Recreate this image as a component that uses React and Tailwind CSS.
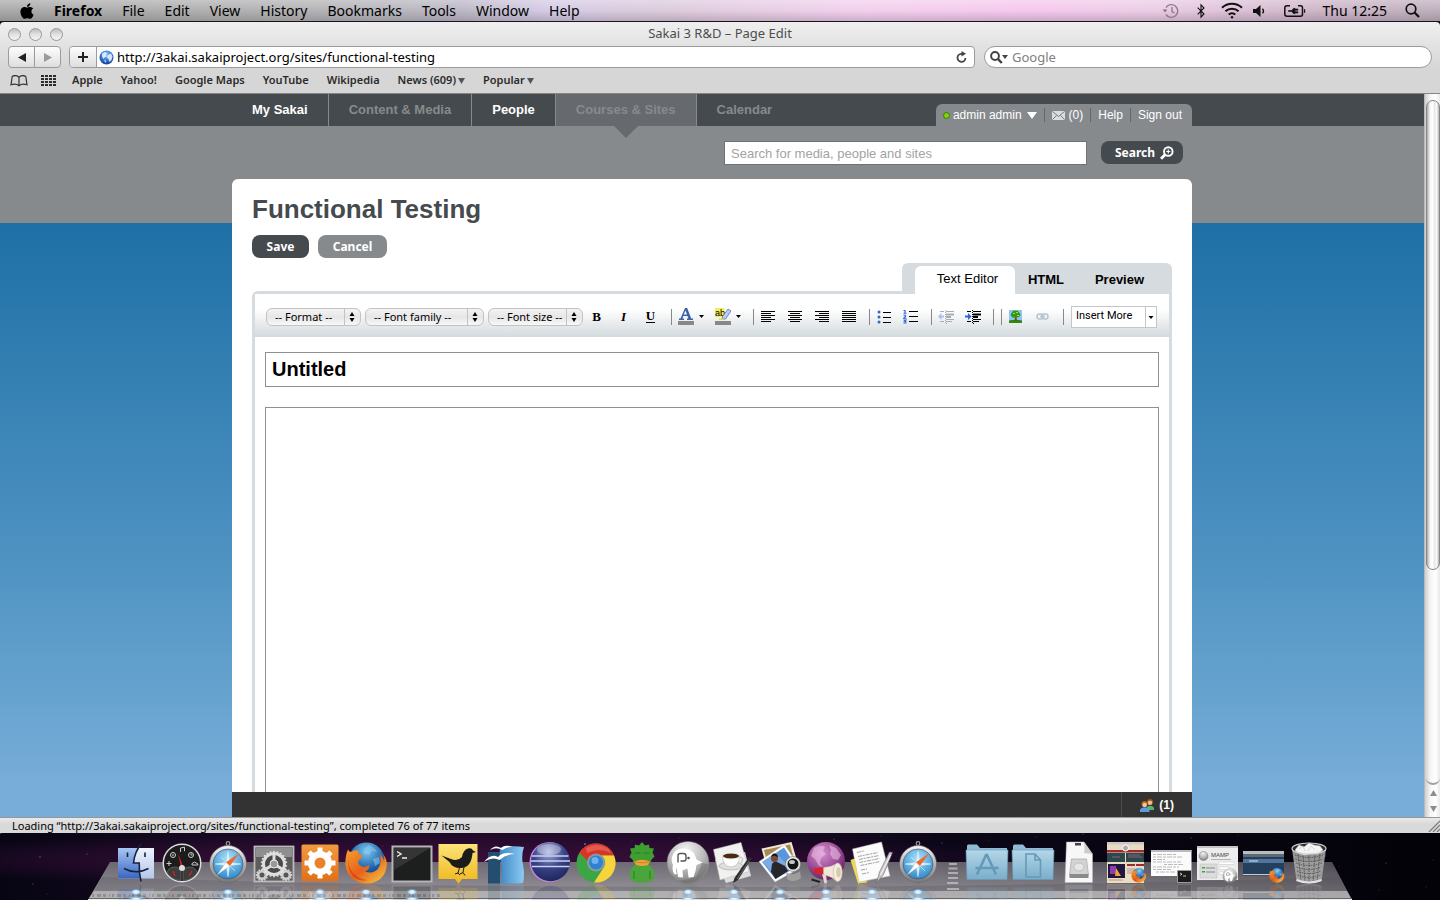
import React from "react";
import { FaApple } from "react-icons/fa";

const UI = "font-['Noto_Sans','Open_Sans',sans-serif]";

const MENUS = ["File", "Edit", "View", "History", "Bookmarks", "Tools", "Window", "Help"];
const BOOKMARKS = ["Apple", "Yahoo!", "Google Maps", "YouTube", "Wikipedia"];

/* ---------- System menu bar ---------- */

function MenuBar() {
  return (
    <header
      className={`${UI} flex h-[22px] shrink-0 items-center justify-between border-b border-[#1d1020] bg-[linear-gradient(to_bottom,rgba(255,255,255,0.28),rgba(255,255,255,0)_50%,rgba(60,60,60,0.22)),linear-gradient(to_right,#aaaaaa,#b4b4b6_22%,#bcb8c6_32%,#d5cbe6_38%,#dccbdc_46%,#f3d0ee_60%,#f5c8ee_72%,#eccde6_80%,#cdb5c8_92%,#bfb0bd)] text-sm text-black`}
    >
      <nav className="flex items-center gap-5 pl-5">
        <button aria-label="Apple menu" className="flex w-[14px] justify-center">
          <FaApple className="h-[18px] w-[18px] shrink-0" />
        </button>
        <button className="font-bold">Firefox</button>
        {MENUS.map((m) => (
          <button key={m}>{m}</button>
        ))}
      </nav>
      <div className="flex items-center pr-5">
        <svg className="mr-[17px] h-4 w-[18px]" viewBox="0 0 18 16" fill="none" stroke="#8d7d8b" strokeWidth="1.4">
          <path d="M4 4.5A6.4 6.4 0 1 1 4 11.5M3 8.5V6.5M10 4v4.5l2.5 1.5" />
          <path d="M.5 6.5h5L3 9.6z" fill="#8d7d8b" stroke="none" />
        </svg>
        <svg className="mr-4 h-4 w-2" viewBox="0 0 8 16" fill="none" stroke="#111" strokeWidth="1.1">
          <path d="M.7 4.7 7 11l-3 3.2V1.8L7 5 .7 11.3" />
        </svg>
        <svg className="mr-2.5 h-[17px] w-[22px]" viewBox="0 0 22 17" fill="none" stroke="#111" strokeWidth="2">
          <path d="M1 5.8a14.5 14.5 0 0 1 20 0M4.400 9.300a9.600 9.600 0 0 1 13.200 0M7.700 12.600a4.900 4.900 0 0 1 6.600 0" />
          <circle cx="11" cy="15.200" r="1.200" fill="#111" stroke="none" />
        </svg>
        <svg className="mr-[17px] h-3 w-[14px]" viewBox="0 0 14 12">
          <path d="M0 4h3l4.500-4v12L3 8H0z" fill="#111" />
          <path d="M9.500 3.600c1.300 1.500 1.300 3.300 0 4.800" fill="none" stroke="#111" strokeWidth="1.300" />
        </svg>
        <svg className="mr-4 h-3 w-[22px]" viewBox="0 0 22 12">
          <path d="M6 .8H3Q.8.8.8 3v6q0 2.200 2.200 2.200H16.500q2 0 2-2V3q0-2.200-2-2.200H14" fill="none" stroke="#111" strokeWidth="1.500" />
          <path d="M20 4.200h1.200v3.600H20z" fill="#111" />
          <path d="M4.500 5.500H8Q8.500 3.200 11 3.200V4h3v1.200h-3v1.600h3V8h-3v.8Q8.500 8.800 8 6.500H4.500z" fill="#111" stroke="#111" strokeWidth=".6" />
        </svg>
        <time className="mr-[18px]">Thu 12:25</time>
        <svg className="h-[15px] w-[15px]" viewBox="0 0 15 15" fill="none" stroke="#111">
          <circle cx="6" cy="6" r="4.800" strokeWidth="1.700" />
          <path d="M9.500 9.500 14 14" strokeWidth="2.300" />
        </svg>
      </div>
    </header>
  );
}

/* ---------- Browser chrome ---------- */

function WindowDot({ label }) {
  return (
    <button
      aria-label={label}
      className="h-[13px] w-[13px] rounded-full border border-[#989898] bg-[linear-gradient(to_bottom,#bdbdbd,#e2e2e2_50%,#f4f4f4)]"
    />
  );
}

function GlobeIcon() {
  return (
    <svg className="h-[15px] w-[15px] shrink-0" viewBox="0 0 15 15">
      <defs>
        <radialGradient id="fav" cx=".5" cy=".3" r=".7">
          <stop offset="0" stopColor="#8fc4f5" />
          <stop offset=".6" stopColor="#2f73cf" />
          <stop offset="1" stopColor="#17408f" />
        </radialGradient>
      </defs>
      <circle cx="7.500" cy="7.500" r="7" fill="url(#fav)" />
      <path d="M3 3.500 6 2l2 1-1 2 1 1.500-2 .5L4.500 9 3 6.500zM9 5l3-1.500 1.500 3-1 3.500-2 2-1-3L8 7.500zM5 10l2 .5L6.500 13z" fill="#eef6ff" opacity=".85" />
    </svg>
  );
}

function BrowserChrome() {
  return (
    <div className={`${UI} shrink-0 rounded-t-[4px] border-b border-[#868686] bg-[linear-gradient(to_bottom,#efefef,#d6d6d6_65%)]`}>
      <div className="grid h-6 grid-cols-[1fr_auto_1fr] items-center px-2">
        <div className="flex gap-2">
          <WindowDot label="Close" />
          <WindowDot label="Minimize" />
          <WindowDot label="Zoom" />
        </div>
        <h1 className="text-[13px] text-[#4d4d4d]">Sakai 3 R&amp;D – Page Edit</h1>
      </div>
      <div className="flex h-[22px] px-2">
        <div className="flex w-[53px] shrink-0 rounded border border-[#9b9b9b] bg-[linear-gradient(to_bottom,#fdfdfd,#dedede)]">
          <button aria-label="Back" className="flex flex-1 items-center justify-center border-r border-[#9b9b9b]">
            <svg className="h-[9px] w-2" viewBox="0 0 8 9"><path d="M8 0v9L0 4.500z" fill="#222" /></svg>
          </button>
          <button aria-label="Forward" className="flex flex-1 items-center justify-center">
            <svg className="h-[9px] w-2" viewBox="0 0 8 9"><path d="M0 0v9l8-4.500z" fill="#9a9a9a" /></svg>
          </button>
        </div>
        <div className="ml-2 flex min-w-0 flex-1 items-center rounded border border-[#9b9b9b] bg-white">
          <button aria-label="Add bookmark" className="flex h-full w-[27px] shrink-0 items-center justify-center rounded-l border-r border-[#9b9b9b] bg-[linear-gradient(to_bottom,#fdfdfd,#dedede)]">
            <svg className="h-[10px] w-[10px]" viewBox="0 0 10 10"><path d="M4 0h2v4h4v2H6v4H4V6H0V4h4z" fill="#222" /></svg>
          </button>
          <span className="ml-0.5 flex"><GlobeIcon /></span>
          <input
            aria-label="Address"
            defaultValue="http://3akai.sakaiproject.org/sites/functional-testing"
            className="ml-[3px] min-w-0 flex-1 bg-transparent text-[13px] leading-5 text-black outline-none"
          />
          <button aria-label="Reload" className="mr-[7px]">
            <svg className="h-3 w-[11px]" viewBox="0 0 11 12">
              <path d="M6.500 2.800H5.300a4 4 0 1 0 4.200 4.200" fill="none" stroke="#444" strokeWidth="1.800" />
              <path d="M5.500 0v5.600L10 2.800z" fill="#444" />
            </svg>
          </button>
        </div>
        <div className="ml-[9px] flex w-[448px] min-w-0 items-center rounded-full border border-[#9b9b9b] bg-white pl-[5px]">
          <svg className="h-[13px] w-[18px] shrink-0" viewBox="0 0 18 13">
            <circle cx="5" cy="5" r="3.900" fill="none" stroke="#444" strokeWidth="2" />
            <path d="m7.800 7.800 4 4.200" stroke="#444" strokeWidth="2.400" />
            <path d="M12 4h6l-3 4z" fill="#444" />
          </svg>
          <input aria-label="Google search" placeholder="Google" className="ml-1 min-w-0 flex-1 bg-transparent text-[13px] leading-5 outline-none placeholder:text-[#808080]" />
        </div>
      </div>
      <nav className="flex h-[25px] items-center pl-[10px] text-[11px] font-semibold text-[#2b2b2b]">
        <button aria-label="Bookmarks" className="mr-[13px]">
          <svg className="h-3 w-[18px]" viewBox="0 0 18 12" fill="none" stroke="#333" strokeWidth="1.200">
            <path d="M9 2.200C7 .4 4 .4 2.200 1.500L1 9.800C3.500 9 7 9 9 10.800 11 9 14.500 9 17 9.800L15.800 1.500C14 .4 11 .4 9 2.200zM9 2.200v8.500" />
          </svg>
        </button>
        <button aria-label="Top sites" className="mr-4">
          <svg className="h-[11px] w-[15px]" viewBox="0 0 15 11">
            <path d="M0 1h15M0 4h15M0 7h15M0 10h15" stroke="#2b2b2b" strokeWidth="2" strokeDasharray="3 1" />
          </svg>
        </button>
        <div className="flex items-center gap-[18px]">
          {BOOKMARKS.map((b) => (
            <a key={b} href="#">{b}</a>
          ))}
          {["News (609)", "Popular"].map((b) => (
            <button key={b} className="flex items-center gap-0.5">
              {b}
              <svg className="h-[6px] w-[7px]" viewBox="0 0 7 6"><path d="M0 0h7L3.500 6z" fill="#555" /></svg>
            </button>
          ))}
        </div>
      </nav>
    </div>
  );
}

/* ---------- Site header ---------- */

function SiteNav() {
  const item = "flex items-center border-r border-[#868a8d] px-5";
  const divider = "mx-[7px] h-[14px] w-px bg-[#63676a]";
  return (
    <div className="bg-[#454a4e]">
      <div className="mx-auto flex h-8 w-full max-w-[960px] justify-between">
        <nav className="flex text-[13px] font-bold text-white">
          <a href="#" className={item}>My Sakai</a>
          <a href="#" className={`${item} text-[#868a8d]`}>Content &amp; Media</a>
          <a href="#" className={item}>People</a>
          <a href="#" className={`${item} relative bg-[#666a6f] text-[#868a8d]`}>
            Courses &amp; Sites
            <svg className="absolute top-full left-1/2 -ml-3 h-3 w-6" viewBox="0 0 24 12"><path d="M0 0h24L12 12z" fill="#666a6f" /></svg>
          </a>
          <a href="#" className="flex items-center px-5 text-[#868a8d]">Calendar</a>
        </nav>
        <div className="flex h-[22px] items-center self-end rounded-t-[6px] bg-[#868a8d] px-[7px] text-xs text-white">
          <span className="mr-[3px] h-[7px] w-[7px] rounded-full border border-[#3c7a00] bg-[#7fd010]" />
          <button className="flex items-center gap-[5px]">
            admin admin
            <svg className="h-[7px] w-[10px]" viewBox="0 0 10 7"><path d="M0 0h10L5 7z" fill="#fff" /></svg>
          </button>
          <span className={divider} />
          <a href="#" className="flex items-center gap-1">
            <svg className="h-[9px] w-[13px]" viewBox="0 0 13 9">
              <rect width="13" height="9" rx="1" fill="#dcdcdc" />
              <path d="m.5.5 6 5 6-5M.5 8.500l4-4M12.500 8.500l-4-4" fill="none" stroke="#777b7e" />
            </svg>
            (0)
          </a>
          <span className={divider} />
          <a href="#">Help</a>
          <span className={divider} />
          <a href="#" className="pr-[3px]">Sign out</a>
        </div>
      </div>
    </div>
  );
}

function SearchRow() {
  return (
    <form className="mt-[15px] mb-[14px] flex justify-end pr-[9px]" onSubmit={(e) => e.preventDefault()}>
      <input
        aria-label="Search"
        placeholder="Search for media, people and sites"
        className="h-6 w-[363px] border border-[#6e7275] bg-white px-1.5 text-[13px] outline-none placeholder:text-[#a3a3a3]"
      />
      <button className={`${UI} ml-[14px] flex h-[23px] w-[82px] items-center gap-[5px] rounded-[8px] bg-[#454a4e] pl-[14px] text-xs font-bold text-white`}>
        Search
        <svg className="h-[14px] w-[14px]" viewBox="0 0 14 14" fill="none" stroke="#fff">
          <circle cx="8.300" cy="5.500" r="4.300" strokeWidth="1.900" />
          <path d="m5 8.800-4 4" strokeWidth="2.800" />
          <path d="M6.300 5.500h4M8.300 3.500v4" strokeWidth="1.200" />
        </svg>
      </button>
    </form>
  );
}

/* ---------- Editor ---------- */

function PillSelect({ label, name, className }) {
  return (
    <span className={`relative flex h-[18px] ${className}`}>
      <select
        aria-label={name}
        className={`${UI} w-full appearance-none rounded-[6px] border border-[#c3c3c3] bg-[linear-gradient(to_bottom,#f4f4f4,#e6e6e6_50%,#f8f8f8)] pl-2 text-[11px] leading-4 text-black outline-none`}
      >
        <option>{label}</option>
      </select>
      <svg className="pointer-events-none absolute top-0 right-0 h-[18px] w-[17px]" viewBox="0 0 17 18">
        <path d="M.5 1v16" stroke="#c3c3c3" />
        <path d="M5.500 8 8 4l2.500 4zM5.500 10 8 14l2.500-4z" fill="#000" />
      </svg>
    </span>
  );
}

function Sep() {
  return <span className="ml-[7px] h-4 w-px shrink-0 bg-[#8d8688]" />;
}

function Tool({ label, children, className = "w-[27px]" }) {
  return (
    <button aria-label={label} className={`flex h-6 shrink-0 items-center justify-center ${className}`}>
      {children}
    </button>
  );
}

const ALIGN = {
  "Align left": "M0 1.500h14M0 3.500h10M0 5.500h14M0 7.500h10M0 9.500h14M0 11.500h10",
  "Align center": "M0 1.500h14M2 3.500h10M0 5.500h14M2 7.500h10M0 9.500h14M2 11.500h10",
  "Align right": "M0 1.500h14M4 3.500h10M0 5.500h14M4 7.500h10M0 9.500h14M4 11.500h10",
  Justify: "M0 1.500h14M0 3.500h14M0 5.500h14M0 7.500h14M0 9.500h14M0 11.500h14",
};

function IndentIcon({ out }) {
  const ink = out ? "#a9adb0" : "#000";
  const blue = out ? "#a9c0ee" : "#2f62d9";
  return (
    <svg className="h-[14px] w-4" viewBox="0 0 16 14" fill="none">
      <path d="M2 1.500h4M8 1.500h8M2 11.500h4M8 11.500h6M8 9.500h8M8 13.500h1" stroke={ink} />
      <path d="M8 4.500h8M8 7h5" stroke={ink} strokeWidth="2" />
      <path d="M7.500 0v14" stroke={ink} strokeDasharray="1 1" />
      {out ? <path d="M0 6.500 3.500 3v2.500H6v2H3.500V10z" fill={blue} /> : <path d="M6.500 6.500 3 3v2.500H0v2h3V10z" fill={blue} />}
    </svg>
  );
}

function Caret() {
  return <svg className="h-[3px] w-[5px]" viewBox="0 0 5 3"><path d="M0 0h5L2.500 3z" fill="#000" /></svg>;
}

function Toolbar() {
  return (
    <div className="flex h-[43px] items-center bg-[linear-gradient(to_bottom,#ffffff_35%,#d3dade)] pt-0.5 pr-3 pl-[11px]">
      <div className="flex gap-1">
        <PillSelect name="Format" label="-- Format --" className="w-[95px]" />
        <PillSelect name="Font family" label="-- Font family --" className="w-[119px]" />
        <PillSelect name="Font size" label="-- Font size --" className="w-[95px]" />
      </div>
      <div className="flex font-['Liberation_Serif',serif] text-[13px] font-bold">
        <Tool label="Bold"><span className="font-black">B</span></Tool>
        <Tool label="Italic"><span className="italic">I</span></Tool>
        <Tool label="Underline"><span className="border-b border-black leading-3">U</span></Tool>
      </div>
      <Sep />
      <Tool label="Text color" className="w-[37px] gap-[5px]">
        <svg className="h-[17px] w-4" viewBox="0 0 16 17">
          <path d="M7 0h2.200l4 10.500H15V12H9v-1.500h1.300L9.500 8H5.300l-.8 2.500H6V12H1v-1.500h1.500zm.4 2.500L5.800 6.600H9z" fill="#3d62a6" />
          <path d="M0 13h16v4H0z" fill="#888" />
        </svg>
        <Caret />
      </Tool>
      <Tool label="Highlight color" className="w-[37px] gap-[5px]">
        <svg className="h-[17px] w-4" viewBox="0 0 16 17">
          <path d="M0 0h9.500v9H0z" fill="#f4ee5a" />
          <text x="0" y="8" fontSize="9" fontFamily="Liberation Sans, sans-serif" fill="#000">ab</text>
          <path d="m13 1 3 2-5.500 8H7l.5-2.500z" fill="#b8cdf2" stroke="#5573a8" strokeWidth=".8" />
          <path d="M4 10.500h5l-1 1.500H4z" fill="#e5dd3c" />
          <path d="M0 13h16v4H0z" fill="#888" />
        </svg>
        <Caret />
      </Tool>
      <Sep />
      {Object.entries(ALIGN).map(([label, d]) => (
        <Tool key={label} label={label}>
          <svg className="h-[13px] w-[14px]" viewBox="0 0 14 13"><path d={d} stroke="#000" /></svg>
        </Tool>
      ))}
      <Sep />
      <Tool label="Bulleted list">
        <svg className="h-[14px] w-[14px]" viewBox="0 0 14 14">
          <path d="M6 2.500h8M6 7.500h8M6 12.500h8" stroke="#000" />
          <circle cx="2" cy="2" r="1.500" fill="#3d65b5" /><circle cx="2" cy="7" r="1.500" fill="#3d65b5" /><circle cx="2" cy="12" r="1.500" fill="#3d65b5" />
        </svg>
      </Tool>
      <Tool label="Numbered list">
        <svg className="h-[15px] w-[15px]" viewBox="0 0 15 15" fill="none">
          <path d="M6 2.500h9M6 7.500h9M6 12.500h9" stroke="#000" />
          <path d="M.5 1.500H2V4M.5 4.300h3M.5 6.200h2v1.300l-2 1.800h3M.5 11h2.300l-1.300 1.200h1.300v1.800H.5" stroke="#2f62d9" strokeWidth="1.100" />
        </svg>
      </Tool>
      <Sep />
      <Tool label="Outdent"><IndentIcon out /></Tool>
      <Tool label="Indent"><IndentIcon /></Tool>
      <Sep />
      <Sep />
      <Tool label="Insert image">
        <svg className="h-[13px] w-[13px]" viewBox="0 0 13 13">
          <path d="M0 0h13v13H0z" fill="#8fc3f5" />
          <path d="M0 10.500q6-1.500 13 0V13H0z" fill="#2d8a10" />
          <path d="M6 7h1.500l.5 4H5.500z" fill="#7a4a12" />
          <path d="M3 2.500Q4 0 6.500.8 9-.2 10 2.500 12 3.500 11 6 9.500 8 7 7.200 3.500 8.500 2.200 6 1 4 3 2.500z" fill="#2f9b12" />
          <path d="M4 3h2v1H4zM7 2h2v1H7zM8 5h2v1H8z" fill="#a6dc4a" />
        </svg>
      </Tool>
      <Tool label="Insert link">
        <svg className="h-[7px] w-[13px]" viewBox="0 0 13 7" fill="none" stroke="#b7c2cf" strokeWidth="1.500">
          <rect x="1" y="1" width="6" height="5" rx="2.400" /><rect x="6" y="1" width="6" height="5" rx="2.400" /><path d="M4 3.500h5" />
        </svg>
      </Tool>
      <Sep />
      <span className="relative ml-[7px] flex h-[22px] w-[86px] shrink-0">
        <select aria-label="Insert More" className="w-full appearance-none border border-[#c4c7c9] bg-white pl-1 font-['Roboto',sans-serif] text-[11px] text-black outline-none">
          <option>Insert More</option>
        </select>
        <svg className="pointer-events-none absolute top-0 right-0 h-[22px] w-3" viewBox="0 0 12 22">
          <path d="M.5 1v20" stroke="#c4c7c9" /><path d="M3.500 10h5L6 13z" fill="#000" />
        </svg>
      </span>
    </div>
  );
}

function Editor() {
  const pill = `${UI} h-[23px] rounded-[8px] text-xs font-bold text-white`;
  return (
    <main className="flex min-h-0 flex-1 flex-col rounded-t-[6px] bg-white px-5 pt-4">
      <h2 className="text-[26px] leading-7 font-bold text-[#454a4e]">Functional Testing</h2>
      <div className="mt-3 flex gap-[9px]">
        <button className={`${pill} w-[57px] bg-[#454a4e]`}>Save</button>
        <button className={`${pill} w-[69px] bg-[#868a8d]`}>Cancel</button>
      </div>
      <div role="tablist" className="mt-[5px] flex h-7 self-end rounded-t-[6px] bg-[#d5dbdf] pt-[3px] pl-[13px] text-[13px] text-black">
        <button role="tab" aria-selected="true" className="z-10 -mb-[3px] h-7 w-[100px] rounded-t-[6px] bg-white pb-0.5 pl-[5px]">Text Editor</button>
        <button role="tab" aria-selected="false" className="w-[62px] pt-0.5 font-bold">HTML</button>
        <button role="tab" aria-selected="false" className="mr-[10px] w-[85px] pt-0.5 font-bold">Preview</button>
      </div>
      <div className="flex min-h-0 flex-1 flex-col rounded-tl-[6px] border-x-[3px] border-t-[3px] border-[#d5dbdf]">
        <Toolbar />
        <div className="flex min-h-0 flex-1 flex-col px-2.5 pt-[15px]">
          <input aria-label="Page title" defaultValue="Untitled" className="h-[35px] w-full shrink-0 border border-[#8f8f8f] px-1.5 text-xl font-bold text-black outline-none" />
          <textarea aria-label="Page content" className="mt-5 min-h-0 w-full flex-1 resize-none border border-b-0 border-[#8f8f8f] outline-none" />
        </div>
      </div>
    </main>
  );
}

function ChatBar() {
  return (
    <div className="flex h-[25px] shrink-0 justify-end bg-[#333]">
      <button className="flex items-center gap-[5px] border-l border-[#4b4b4b] pr-[18px] pl-[18px] text-xs font-bold text-white">
        <svg className="h-[14px] w-[14px]" viewBox="0 0 14 14">
          <path d="M7 12V9q2-2 5-1l2 1.500V12z" fill="#58b368" />
          <circle cx="10" cy="4" r="3.300" fill="#8a4a1c" /><circle cx="10" cy="4.800" r="2.300" fill="#f0b98a" />
          <path d="M0 14v-2.500Q1.500 9.300 5 9.300t4.500 2V14z" fill="#5b9be0" />
          <circle cx="4.500" cy="6" r="3" fill="#b5651d" /><circle cx="4.700" cy="6.900" r="2.200" fill="#f6c79c" />
        </svg>
        (1)
      </button>
    </div>
  );
}

function Scrollbar() {
  return (
    <div aria-hidden="true" className="flex w-4 shrink-0 flex-col border-l border-[#b9b9b9] bg-[linear-gradient(to_right,#cfcfcf,#f5f5f5_35%,#ffffff_70%,#e9e9e9)] pl-px">
      <div className="mt-1.5 h-[470px] rounded-full border border-[#858585] bg-[linear-gradient(to_right,#a9a9a9,#f6f6f6_25%,#ffffff_45%,#e6e6e6_65%,#fbfbfb_80%,#b5b5b5)]" />
      <div className="flex-1 rounded-b-full border-b-2 border-[#9f9f9f]" />
      <div className="flex h-8 flex-col items-center justify-around">
        <svg className="h-1.5 w-[7px]" viewBox="0 0 7 6"><path d="M0 6h7L3.500 0z" fill="#8c8c8c" /></svg>
        <svg className="h-1.5 w-[7px]" viewBox="0 0 7 6"><path d="M0 0h7L3.500 6z" fill="#8c8c8c" /></svg>
      </div>
    </div>
  );
}

function StatusBar() {
  return (
    <footer className={`${UI} flex h-4 shrink-0 items-center justify-between border-t border-[#979797] bg-[linear-gradient(to_bottom,#eaeaea,#d9d9d9_40%)] pl-3 text-[11px] leading-none text-black`}>
      <span className="pb-px">Loading “http://3akai.sakaiproject.org/sites/functional-testing”, completed 76 of 77 items</span>
      <svg className="h-3 w-3" viewBox="0 0 12 12"><path d="M1 12 12 1M5 12l7-7M9 12l3-3" stroke="#777" strokeWidth="1.200" /></svg>
    </footer>
  );
}

/* ---------- Dock icons (46 x 46 drawings) ---------- */

function Defs() {
  return (
    <svg className="absolute h-0 w-0" aria-hidden="true">
      <defs>
        <linearGradient id="finL" x2="0" y2="1"><stop stopColor="#a9c6f3" /><stop offset="1" stopColor="#3a66c0" /></linearGradient>
        <linearGradient id="finR" x2="0" y2="1"><stop stopColor="#eef3fd" /><stop offset="1" stopColor="#b4c6ea" /></linearGradient>
        <linearGradient id="steel" x2="0" y2="1"><stop stopColor="#f4f4f4" /><stop offset="1" stopColor="#777" /></linearGradient>
        <linearGradient id="orange" x2="0" y2="1"><stop stopColor="#f39a3e" /><stop offset="1" stopColor="#e0701a" /></linearGradient>
        <linearGradient id="yellow" x2="0" y2="1"><stop stopColor="#fbe37a" /><stop offset="1" stopColor="#f0b81d" /></linearGradient>
        <linearGradient id="oo" x2="1"><stop stopColor="#3f88c4" /><stop offset="1" stopColor="#8ccaf4" /></linearGradient>
        <linearGradient id="fold" x2="0" y2="1"><stop stopColor="#b5d6e8" /><stop offset="1" stopColor="#79aecb" /></linearGradient>
        <linearGradient id="flame" x2="1" y2="1"><stop stopColor="#f6a12c" /><stop offset=".5" stopColor="#e8601a" /><stop offset="1" stopColor="#f7d247" /></linearGradient>
        <radialGradient id="sky" cx=".5" cy=".3" r=".8"><stop stopColor="#a9e0fa" /><stop offset="1" stopColor="#1c7dc4" /></radialGradient>
        <radialGradient id="sea" cx=".5" cy=".25" r=".8"><stop stopColor="#7cc6ee" /><stop offset=".6" stopColor="#1d62ac" /><stop offset="1" stopColor="#0b2c66" /></radialGradient>
        <radialGradient id="ecl" cx=".45" cy=".25" r=".8"><stop stopColor="#a9b3dd" /><stop offset=".5" stopColor="#3a4488" /><stop offset="1" stopColor="#1b2258" /></radialGradient>
        <radialGradient id="eleph" cx=".45" cy=".2" r=".85"><stop stopColor="#f2f2f2" /><stop offset=".5" stopColor="#bdbdbd" /><stop offset="1" stopColor="#777" /></radialGradient>
        <radialGradient id="purp" cx=".4" cy=".3" r=".8"><stop stopColor="#d491ce" /><stop offset=".6" stopColor="#93448f" /><stop offset="1" stopColor="#4f1c50" /></radialGradient>
        <radialGradient id="glow"><stop stopColor="#fff" /><stop offset=".45" stopColor="#c4e6ff" /><stop offset="1" stopColor="#4ba3ee" stopOpacity="0" /></radialGradient>
      </defs>
    </svg>
  );
}

const Finder = () => (
  <>
    <path d="M5 8h36v30.500H5z" fill="url(#finR)" />
    <path d="M5 8h19.500q-3 7-3.800 15h5.500q-.2 8 .8 15.500H5z" fill="url(#finL)" />
    <path d="M28.500 3.500Q21.500 12 20.500 23h5.700Q26 33 28 41.500M11 28.500Q23 35 35.500 28.500M14.500 12.500v4.500M32 12.500v4.500" fill="none" stroke="#15233f" strokeWidth="1.600" />
  </>
);

const Dashboard = () => (
  <>
    <circle cx="23" cy="23" r="19.500" fill="#ddd" />
    <circle cx="23" cy="23" r="18" fill="#1c1c1c" />
    <path d="M8 33a7.500 7.500 0 0 1 14-2v9.500A18 18 0 0 1 8 33zM38 33a7.500 7.500 0 0 0-14-2v9.500A18 18 0 0 0 38 33z" fill="#3c3c3c" stroke="#777" strokeWidth=".6" />
    <path d="M22 27 19 13.500l5 13z" fill="#e22" /><circle cx="23" cy="28" r="3" fill="#ddd" />
    <path d="m14 31 2 5M33 31l-3 5" stroke="#d22" strokeWidth="1.200" />
    <g fill="none" stroke="#ccc">
      <circle cx="14" cy="15" r="2.500" /><circle cx="32" cy="15" r="2.500" /><path d="M32 13.500V15h1.500M13 15h2M7.500 23.500h5M10 21v5M33 25h6q0-2-2-2-1-2-3 0-1.500 0-1 2zM21.500 12V8l4-.8v4" />
    </g>
  </>
);

const Compass = () => (
  <>
    <circle cx="23" cy="3.500" r="1.800" fill="none" stroke="#999" strokeWidth="1.200" />
    <circle cx="23" cy="24" r="18.500" fill="url(#steel)" stroke="#666" strokeWidth=".6" />
    <circle cx="23" cy="24" r="15" fill="url(#sky)" stroke="#446" strokeWidth=".6" />
    <path d="m23 11.500 1.500 11L35.500 24l-11 1.500L23 36.500l-1.500-11L10.500 24l11-1.500zM16 17l6 6M30 31l-6-6M30 17l-6 6M16 31l6-6" fill="#e6f5fd" stroke="#d5ecf9" strokeWidth=".7" />
    <path d="M34.500 13 24.800 26 21 22.300z" fill="#f0682a" /><path d="M12 35 21 22.300l3.800 3.700z" fill="#fff" stroke="#789" strokeWidth=".3" />
  </>
);

function Gear({ cx, cy, r, teeth, fill, hole, holeFill, tooth = 4 }) {
  return (
    <g>
      {Array.from({ length: teeth }, (_, i) => (
        <rect key={i} x={cx - tooth / 2} y={cy - r - tooth * 0.7} width={tooth} height={tooth * 1.5} rx=".5" fill={fill} transform={`rotate(${(i * 360) / teeth} ${cx} ${cy})`} />
      ))}
      <circle cx={cx} cy={cy} r={r} fill={fill} />
      <circle cx={cx} cy={cy} r={hole} fill={holeFill} />
    </g>
  );
}

const Prefs = () => (
  <>
    <rect x="3.500" y="6.500" width="39" height="35" fill="#5d5d5d" stroke="#bbb" strokeWidth="1.800" />
    <path d="M5 8h36v9H5z" fill="#8f8f8f" />
    <Gear cx={11} cy={35} r={5} teeth={12} fill="#cfcfcf" hole={2.5} holeFill="#555" tooth={1.8} />
    <Gear cx={35} cy={35} r={5} teeth={12} fill="#cfcfcf" hole={2.5} holeFill="#555" tooth={1.8} />
    <Gear cx={23} cy={24} r={12} teeth={22} fill="#dedede" hole={9} holeFill="#4a4a4a" tooth={1.8} />
    <path d="M23 24V14M23 24l-8 5M23 24l8 5" stroke="#dedede" strokeWidth="3" />
    <circle cx="23" cy="24" r="4" fill="#999" stroke="#eee" />
  </>
);

const OrangeGear = () => (
  <>
    <rect x="4.500" y="4.500" width="37" height="37" rx="1.500" fill="url(#orange)" />
    <Gear cx={23} cy={23} r={12} teeth={8} fill="#fff" hole={5.5} holeFill="#e9822a" tooth={5} />
  </>
);

const Firefox = () => (
  <>
    <circle cx="23.500" cy="20.500" r="18" fill="url(#sea)" />
    <path d="M26 5q6 3 8 7l-5-1-3 4-6-2 2-5zM30 19l6-2 1 6-5 3z" fill="#8fd0ee" opacity=".5" />
    <path d="M5 9.500Q6 12 8.500 12 12 9 15.500 11 15 14.500 19 15.500q1.500 1.500-2.500 4-3 3 .5 6 4 3 9-.5 1 4.500-4 6.500 9 3 13.500-3.500Q39 22 36.500 14q4 3 4.500 7.500.500-4-1-7.500 5 6 3.500 13Q41 42 24.500 43.500 5 43 2.500 25 2 16 5 9.500z" fill="url(#flame)" />
    <path d="M6 17q-2 9 4 16 6 6 14 7-8 2-14-4-7-8-4-19z" fill="#c93b12" opacity=".6" />
  </>
);

const Terminal = () => (
  <>
    <rect x="3.500" y="6.500" width="39" height="35" fill="#1d1f1e" stroke="#b5b5b5" strokeWidth="2" />
    <path d="M5 8h36L5 30z" fill="#fff" opacity=".1" />
    <path d="m8 11.500 4 2.500-4 2.500M13 18h5" fill="none" stroke="#eee" strokeWidth="1.400" />
  </>
);

const Bird = () => (
  <>
    <path d="M3.500 4h39v35H27l-3.500 4.500L20 39H3.500z" fill="url(#yellow)" />
    <path d="M6.500 15.500 16 19q7 2.500 11-2 1-7 6-8.500 4-.8 5 2l3 1.500-3.500 1Q36.500 27 26.500 28q-9 .500-12-6z" fill="#1b1b1b" />
    <path d="M24.500 27.500 23 33l-3 1m3-1 2 2M29 27l-1 5.500-3 1.500m3-1.500 2 3" fill="none" stroke="#1b1b1b" />
  </>
);

const OpenOffice = () => (
  <>
    <path d="M7 12h12v31.500H7z" fill="#244e70" />
    <path d="M19 8q10-3 24-1-3 8-1 18 2 10 0 18-12 1-23 0 3-10 1-20-2-8-1-15z" fill="url(#oo)" />
    <path d="M9 10Q14 4 20 8q4-4 12-1-6-.500-10.500 3Q15 6.500 9 10zM3 22Q10 13 17 17q5-6 17-3-9 0-15.500 6Q11 16 3 22z" fill="#fff" />
  </>
);

const Eclipse = () => (
  <>
    <circle cx="22.500" cy="22" r="20" fill="#c685e0" />
    <circle cx="23.500" cy="21.800" r="19.500" fill="url(#ecl)" />
    <path d="M5 16h36.500M4 21h39M5 26.500h37.500" stroke="#c9d0f2" strokeWidth="1.700" />
    <ellipse cx="22" cy="9.500" rx="12" ry="5.500" fill="#fff" opacity=".3" />
  </>
);

const Chrome = () => (
  <>
    <circle cx="23" cy="23" r="19.500" fill="#3aa644" />
    <path d="M6.500 12.500A19.500 19.500 0 0 1 41 15.500L23 15a9 9 0 0 0-8.500 6z" fill="#db3326" />
    <path d="M41 15.500A19.500 19.500 0 0 1 21 42.500L31 27a9 9 0 0 0-2.500-11.500z" fill="#f7d33c" />
    <path d="M13 8Q24 2 35 8.500L38 13q-12-6-24 0z" fill="#fff" opacity=".2" />
    <circle cx="23" cy="22.500" r="9" fill="#8b9aa5" /><circle cx="23" cy="22.500" r="7" fill="#2f82d2" /><circle cx="22" cy="20.500" r="3.500" fill="#8cc6f5" opacity=".7" />
  </>
);

const Adium = () => (
  <>
    <path d="M16 25q-6 4-5.500 12Q12 42.500 23 42.500T35.500 37Q36 29 30 25z" fill="#4aa53a" />
    <path d="m23 2 3 3.500 4-1 .5 3.500 4.500.5-1.500 4 2 4-3 3q-1 6.500-9.500 6.500T13.500 19.500L10.500 17l2-4.500-1.500-4L15.500 8l.5-3.500 4 1z" fill="#3f9e30" />
    <path d="M15 21.500q8-3.500 16 0l-2 3.500q-6 2-12 0z" fill="#f0a23a" />
    <path d="M15 21.800q8 2 16 0" fill="none" stroke="#c57a22" strokeWidth=".8" />
    <path d="M15.500 13h6M24.500 13h6M15 31v8M31 31v8" stroke="#2f7a24" strokeWidth="1" />
  </>
);

const Elephant = () => (
  <>
    <circle cx="23" cy="22.500" r="21" fill="url(#eleph)" stroke="#777" strokeWidth=".5" />
    <path d="M37 23 43 24A21 21 0 0 1 14 41l17-4z" fill="#555" opacity=".35" />
    <path d="M7 17q2-8 10-8.500 8-.5 12.500 5.500l2 5.500 6 3-6 2.500-1 6-2 6-5 .5-1-9-5 2 .5 7-5-.5-1.500-10q-1 5 .5 7l-2.500.5q-3-4-1.500-10Q6 22 7 17z" fill="#fff" />
    <path d="M13 22.500v-7q0-2 2.500-2h3q2.500 0 2.500 2.500v3q0 2-2 2h-3.500" fill="none" stroke="#555" strokeWidth="1.400" />
    <circle cx="23.500" cy="18" r="1.300" fill="#555" />
  </>
);

const Coffee = () => (
  <>
    <path d="m4 20 30-8 6 24-25 7z" fill="#dcdcdc" /><path d="M2.500 9.500 30 2.500l8 29L9 40z" fill="#f1f1ef" stroke="#bbb" strokeWidth=".5" />
    <ellipse cx="20" cy="26" rx="12" ry="4" fill="#dedede" stroke="#999" strokeWidth=".5" />
    <path d="M11.500 16h17q0 10-8.500 11-8.500-1-8.500-11z" fill="#fff" stroke="#aaa" strokeWidth=".5" />
    <ellipse cx="20" cy="16" rx="8.500" ry="3" fill="#4a2a14" stroke="#eee" /><path d="M29 17q5 1 1 6" fill="none" stroke="#ccc" strokeWidth="1.500" />
    <path d="m41 18-14 22-5 3 1.500-5L38 17z" fill="#2c2c2c" /><path d="m38 21-12 18" stroke="#888" strokeWidth=".7" />
  </>
);

const Photos = () => (
  <>
    <path d="m4.500 8.500 30-6.500 5 17-30 8z" fill="#efe9d8" /><path d="m7 10 26-5.500 3 11-26 6z" fill="#a8894f" />
    <path d="M2 21.500 27.500 4.500 43 28 18 42z" fill="#fff" stroke="#bbb" strokeWidth=".4" /><path d="M5 22 27 7.500 39.500 27 18.500 39z" fill="#5b96dc" /><path d="m5 22 14-9 12 13-10 12z" fill="#8fb9e8" opacity=".6" />
    <path d="m14 32 1-8q2-3 5-2l8 4 3 5-12.500 8z" fill="#27262b" /><circle cx="17.500" cy="18.500" r="3.500" fill="#7a4a35" /><path d="M14 17q1-4 4-3.500t3 4q-3-3-7-.5z" fill="#1b1512" />
    <path d="M29 32q8 5 14-1l1 7q-7 6-14 1z" fill="#a3a3a3" opacity=".85" /><circle cx="36" cy="24" r="7.500" fill="#e9e9e9" stroke="#777" strokeWidth=".6" /><circle cx="36" cy="24" r="5.500" fill="#141414" /><ellipse cx="35" cy="22" rx="3" ry="2" fill="#fff" opacity=".75" />
  </>
);

const GlobeHorn = () => (
  <>
    <circle cx="23" cy="21" r="19" fill="url(#purp)" />
    <path d="M11 8q7-4 11-1l-2 4 3 3-5 4-1 5 3 4-4-1-4-7-4-3zM26 5l7 3 5 7-3 5-5-1-3-5 1-4z" fill="#f1c4ea" opacity=".55" />
    <path d="m19 34 2.500 9.500 2.500-.5-1-9z" fill="#e9d9c8" /><path d="M11 28.500q4-1.500 10-1v7l-9-1.500q-2-2-1-4.500z" fill="#d8232a" />
    <path d="M20.500 27.500q8-.500 14-4.500v18.500q-6-5-14-7z" fill="#f1e7d8" stroke="#c7b9a0" strokeWidth=".4" />
    <ellipse cx="34.700" cy="32.300" rx="4.500" ry="9.300" fill="#f4ecdf" stroke="#c2b39a" strokeWidth=".6" /><ellipse cx="35.500" cy="32.300" rx="2.200" ry="5" fill="#d8c8ae" />
    <path d="m8.500 39.500 8.500 2.500" stroke="#222" strokeWidth="2" />
  </>
);

const TextEdit = () => (
  <>
    <path d="M1.500 20 12 16l6 26.500-9 1z" fill="#f2d950" /><path d="M3.500 9 32.500 2 41 36l-31 6z" fill="#fbfbfb" stroke="#bbb" strokeWidth=".5" />
    <path d="m8 12.500 7-1.500M9 16.500l20-4M10 19.500l20-4M10.500 22.500l20-4M11.500 25.500l19.500-4M12 30l6-1M13 34l7-1.500" stroke="#999" strokeWidth=".9" strokeDasharray="4 .8 2 .8" />
    <path d="M43.500 12.500 40.500 12 30.500 32l-3 11 7-8.500z" fill="#c9c9c9" stroke="#666" strokeWidth=".6" /><path d="M41.500 15 31.500 35" stroke="#fff" />
  </>
);

const Folder = ({ app }) => (
  <>
    <path d="M3 6q0-1.500 1.500-1.500H13l3 3.500h27v8H3z" fill="#8fbcd4" />
    <path d="M2 10h42l-1 29.500H3z" fill="url(#fold)" stroke="#6b9cb8" strokeWidth=".6" />
    {app ? (
      <path d="M22.500 14 13 34.500M22.500 14 32 34.500M11.500 28h23" fill="none" stroke="#6599b8" strokeWidth="2.600" />
    ) : (
      <path d="M16 14h9l5.500 6v17H16zM25 14v6h5.500" fill="none" stroke="#6599b8" strokeWidth="1.600" />
    )}
  </>
);
const AppFolder = () => <Folder app />;
const DocFolder = () => <Folder />;

const DiskDoc = () => (
  <>
    <path d="M10.500 2H28l8.500 12v28.500H9z" fill="#f7f7f7" stroke="#bbb" strokeWidth=".5" /><path d="M28 2q1 8 0 11l8.500 1z" fill="#ccc" />
    <path d="M19 3h6v2.500h-6z" fill="#444" /><path d="M15.500 19h15l2 16h-19z" fill="#d3d3d3" stroke="#999" strokeWidth=".6" /><path d="M13.500 34h19v4h-19z" fill="#8a8a8a" /><ellipse cx="23" cy="27" rx="5" ry="4" fill="#e6e6e6" stroke="#aaa" strokeWidth=".6" />
  </>
);

const MiniFox = ({ x, y }) => <g transform={`translate(${x} ${y}) scale(.36)`}><Firefox /></g>;

const ThumbSite = () => (
  <>
    <path d="M5 2h37v41H5z" fill="#e9dcc0" /><path d="M5 2h37v2.500H5z" fill="#c9c9c9" /><path d="M5 10h37v2.500H5z" fill="#9d2a2f" />
    <circle cx="23.500" cy="8" r="3" fill="#aaa" stroke="#fff" /><path d="M5 13h18v9H5zM24 13h18v9H24z" fill="#2d474e" /><path d="M6 24h17v14H6z" fill="#20163e" />
    <path d="M8 26h6v8H8z" fill="#8f3da8" /><path d="m14 28 5 8h-6z" fill="#e9a53c" /><path d="M25 24h8v2h-8zM34 24h8v2h-8z" fill="#9d2a2f" /><path d="M25 29h8M25 31h8M25 33h8M7 40h14M26 15h12M26 17h14M10 17h8" stroke="#a78" strokeWidth=".7" />
    <MiniFox x={28.5} y={27} />
  </>
);

const ThumbTerm = () => (
  <>
    <path d="M3 10h40.500v26H3z" fill="#fbfbfb" /><path d="M3 10h40.500v2H3z" fill="#bbb" />
    <path d="M5 14.500h24M5 17h30M5 19.500h12M5 22h28M16 24.500h20M5 27h26M5 29.500h18M8 32h20" stroke="#aaa" strokeWidth=".8" strokeDasharray="3 1 5 1" />
    <path d="M29.500 30.500h14v12h-14z" fill="#1b1b1b" stroke="#999" /><path d="m32 33 2 1.200-2 1.200M35 36h3" fill="none" stroke="#eee" strokeWidth=".8" />
  </>
);

const ThumbMamp = ({ mirror }) => (
  <>
    <path d="M3 6h41v34H3z" fill="#ececec" /><path d="M3 6h41v2H3z" fill="#c4c4c4" /><circle cx="9.500" cy="16" r="4.500" fill="url(#eleph)" stroke="#777" strokeWidth=".5" />
    {!mirror && <text x="17" y="17" fontSize="6" fontFamily="Liberation Sans, sans-serif" fill="#444">MAMP</text>}
    <path d="M17 19.500h20" stroke="#999" strokeWidth=".7" /><path d="M6 24h17v14H6z" fill="#dcdcdc" stroke="#bbb" strokeWidth=".5" /><path d="M8 27h3v1.500H8zM8 31h3v1.500H8z" fill="#3aa63a" /><path d="M12 28h9M12 32h9" stroke="#888" />
    <path d="M25 22h15v2.500H25zM25 27h10v2.500H25zM25 32h8v2.500h-8z" fill="#fff" stroke="#bbb" strokeWidth=".4" />
    <g transform="translate(28 28) scale(.35)"><Elephant /></g>
  </>
);

const ThumbBlue = () => (
  <>
    <path d="M3 11h41v24.500H3z" fill="#253f5c" /><path d="M3 11h41v3H3z" fill="#b8bcc0" /><path d="M3 14h41v3H3z" fill="#5d6a75" /><path d="M3 19h41v4H3z" fill="#4f769c" /><path d="M9 21h9" stroke="#d5e2ee" /><path d="M3 34.500h41" stroke="#ccc" />
    <MiniFox x={28.5} y={27} />
  </>
);

const Trash = () => (
  <>
    <path d="M6 9q17 6 34 0l-4.500 32q-12.500 4.500-25 0z" fill="#a5a5a5" opacity=".9" />
    <path d="M9 15q14 5 28 0M9.500 19q13.500 5 27 0M10 23q13 5 26 0M10.500 27q12.500 5 25 0M11 31q12 5 24 0M11.500 35q11.500 5 23 0M12 12l3 30M17 13l2 30M23 13v30M29 13l-2 30M34 12l-3 30" fill="none" stroke="#444" strokeWidth=".8" strokeDasharray="1.500 1" />
    <ellipse cx="23" cy="8.500" rx="16.500" ry="5" fill="#2c2c30" />
    <path d="m9 10 4-5 5 2 5-4 5 2 6 1 3 4-5 4-8 0-6 1-6-2z" fill="#f4f4f4" stroke="#c4c4c4" strokeWidth=".5" /><path d="m13 9 4-3 2 5M22 11l3-5 4 4" fill="none" stroke="#ccc" strokeWidth=".8" />
    <ellipse cx="23" cy="8.500" rx="17" ry="5.500" fill="none" stroke="#d4d4d4" strokeWidth="1.200" />
    <path d="M10.500 40q12.500 5 25 0" fill="none" stroke="#e2e2e2" strokeWidth="2" />
  </>
);

const APPS = [
  ["Finder", Finder, true], ["Dashboard", Dashboard], ["Safari", Compass, true], ["System Preferences", Prefs],
  ["Gear", OrangeGear, true], ["Firefox", Firefox, true], ["Terminal", Terminal, true], ["Bird", Bird],
  ["OpenOffice", OpenOffice], ["Eclipse", Eclipse], ["Chrome", Chrome], ["Adium", Adium],
  ["Elephant", Elephant, true], ["Coffee", Coffee, true], ["Preview", Photos, true], ["Globe", GlobeHorn, true],
  ["TextEdit", TextEdit, true], ["Safari window", Compass, true],
];
const ITEMS = [
  ["Applications", AppFolder], ["Documents", DocFolder], ["Disk image", DiskDoc], ["Site window", ThumbSite],
  ["Terminal window", ThumbTerm], ["MAMP window", ThumbMamp], ["Blue window", ThumbBlue], ["Trash", Trash],
];

function DockItem({ name, Icon, running }) {
  return (
    <button aria-label={name} className="w-[46px] shrink-0">
      <svg className="h-[60px] w-[46px]" viewBox="0 0 46 60">
        <g transform="translate(0 87) scale(1 -1)" opacity=".18"><Icon mirror /></g>
        <Icon />
        {running && <ellipse cx="23" cy="52" rx="6" ry="3.500" fill="url(#glow)" />}
        {running && <ellipse cx="23" cy="59" rx="8" ry="2.500" fill="url(#glow)" />}
      </svg>
    </button>
  );
}

function Dock() {
  return (
    <section aria-label="Dock" className="relative flex h-[67px] shrink-0 justify-center overflow-hidden bg-[radial-gradient(ellipse_at_30%_40%,#3a0f3c,transparent_45%),linear-gradient(to_right,#070513,#1c0a26_20%,#220a2a_45%,#0c0718_65%,#030208)] pt-[7px] pl-1">
      <Defs />
      <svg className="absolute inset-0 h-full w-full" viewBox="0 0 1440 67" preserveAspectRatio="none" aria-hidden="true">
        <defs>
          <linearGradient id="shelf" x2="0" y2="1"><stop stopColor="#5b5661" /><stop offset="1" stopColor="#918f95" /></linearGradient>
          <linearGradient id="shade" x2="1"><stop stopColor="#fff" stopOpacity=".1" /><stop offset=".5" stopColor="#fff" stopOpacity=".12" /><stop offset="1" stopColor="#000" stopOpacity=".15" /></linearGradient>
        </defs>
        {Array.from({ length: 70 }, (_, i) => (
          <circle key={i} cx={(i * 397) % 1440} cy={(i * 23) % 64} r={i % 5 ? 0.6 : 1} fill="#8f8fb0" opacity={i % 3 ? 0.35 : 0.7} />
        ))}
        <path d="M110 29H1332L1352 67H88z" fill="url(#shelf)" />
        <path d="M110 29H1332L1352 67H88z" fill="url(#shade)" />
        <path d="M102 44Q400 54 720 54T1340 44L1347 58H94z" fill="#4b474f" opacity=".25" />
        <path d="M94 58H1347L1351 65H89z" fill="#b9b8ba" opacity=".75" />
        <path d="M92 62.500H440" stroke="#555" strokeWidth="3" strokeDasharray="2 3 4 2 3 3 1 2" opacity=".35" />
        <path d="M89 65.500H1352" stroke="#666" />
        <path d="M88 66.500H1352" stroke="#eee" />
      </svg>
      <div className="relative flex h-[60px]">
        {APPS.map(([name, Icon, running]) => (
          <DockItem key={name} name={name} Icon={Icon} running={running} />
        ))}
        <svg className="h-[60px] w-[23px]" viewBox="0 0 23 60" aria-hidden="true">
          <path d="M8 24h8M7.500 28.500h9M7 33h10M7 38h10M6 43h11M6 49h12" stroke="#c9c9cc" strokeWidth="2" opacity=".7" />
        </svg>
        {ITEMS.map(([name, Icon]) => (
          <DockItem key={name} name={name} Icon={Icon} />
        ))}
      </div>
    </section>
  );
}

export default function App() {
  return (
    <div className="flex h-screen flex-col overflow-hidden bg-black font-['Liberation_Sans',Arial,sans-serif]">
      <MenuBar />
      <BrowserChrome />
      <div className="flex min-h-0 flex-1">
        <div className="flex min-w-0 flex-1 flex-col bg-[linear-gradient(to_bottom,#868a8d_129px,#1e70a6_129px,#4f93c2_65%,#77add8_95%)]">
          <SiteNav />
          <div className="mx-auto flex min-h-0 w-full max-w-[960px] flex-1 flex-col">
            <SearchRow />
            <Editor />
            <ChatBar />
          </div>
        </div>
        <Scrollbar />
      </div>
      <StatusBar />
      <Dock />
    </div>
  );
}
